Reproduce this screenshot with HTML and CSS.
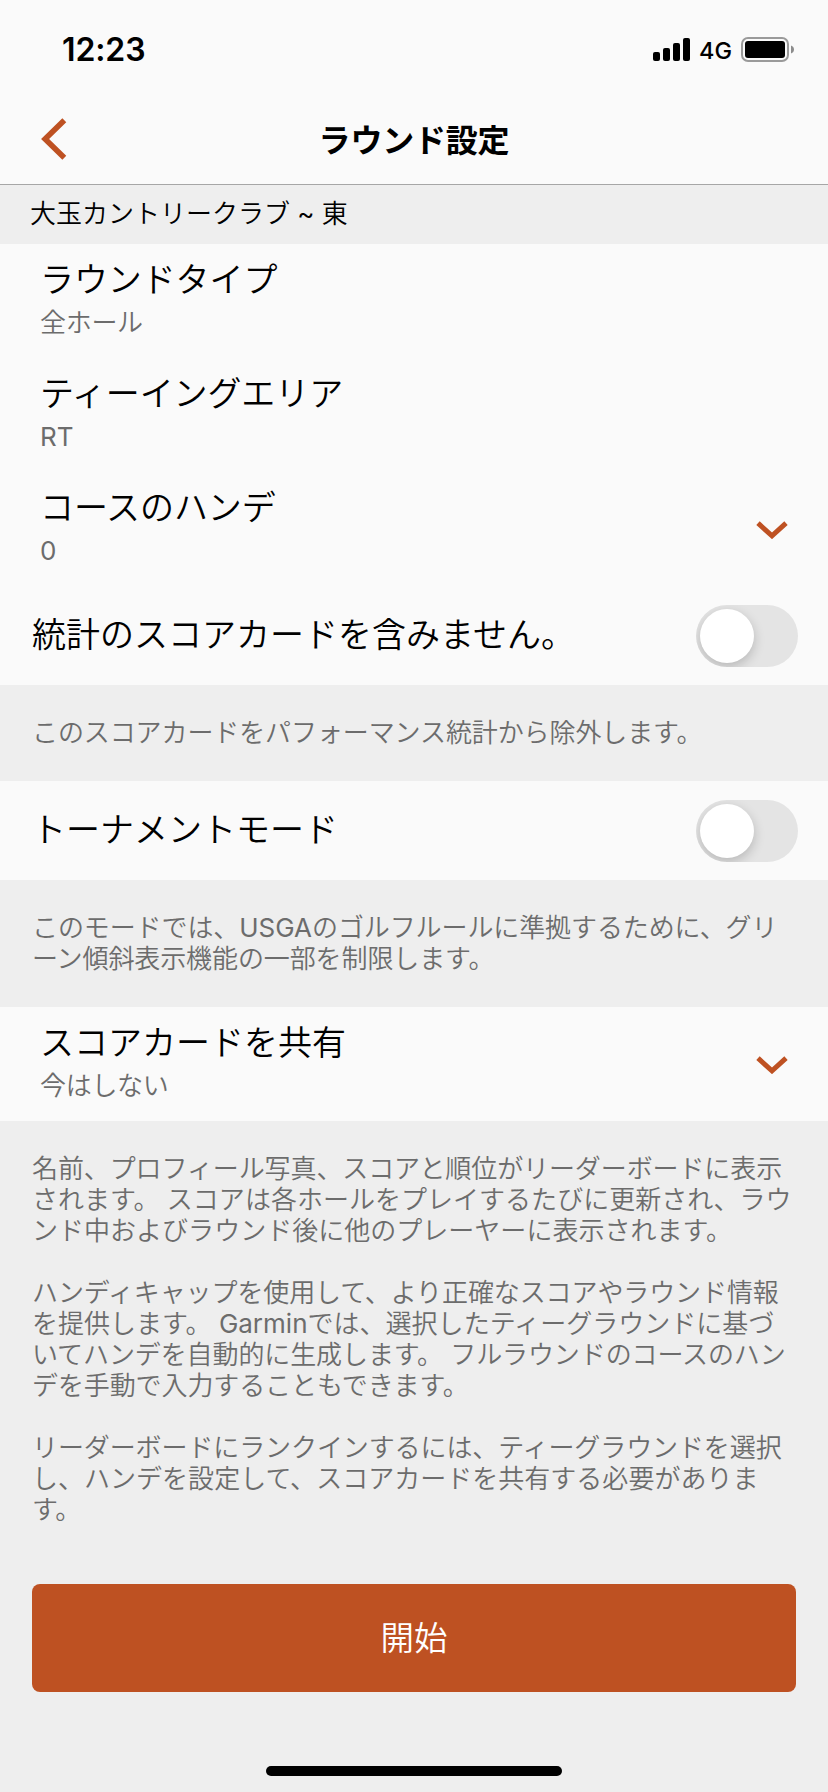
FILE: index.html
```html
<!DOCTYPE html>
<html lang="ja">
<head>
<meta charset="utf-8">
<title>ラウンド設定</title>
<link rel="stylesheet" href="styles.css">
</head>
<body>
<div class="screen">
  <div class="status">
    <span class="time">12:23</span>
    <div class="indicators">
      <svg class="signal" width="38" height="24" viewBox="0 0 38 24"><rect x="0" y="14" width="7" height="9" rx="2"/><rect x="10" y="10" width="7" height="13" rx="2"/><rect x="20" y="5" width="7" height="18" rx="2"/><rect x="30" y="0" width="7" height="23" rx="2"/></svg>
      <span class="network">4G</span>
      <svg class="battery" width="53" height="25" viewBox="0 0 53 25"><rect x="1" y="1" width="46" height="23" rx="6" fill="none" stroke="#9a9a9a" stroke-width="2"/><rect x="4" y="4" width="40" height="17" rx="3"/><path d="M50 8.500c4 1.200 4 6.800 0 8z" fill="#8c8c8c"/></svg>
    </div>
  </div>
  <header class="nav">
    <svg class="back" width="26" height="42" viewBox="0 0 26 42"><path d="M23.300 2.300 4.100 21l19.200 18.700" fill="none" stroke="#be5122" stroke-width="5.600"/></svg>
    <h1 class="title">ラウンド設定</h1>
  </header>
  <div class="course">大玉カントリークラブ <span class="latin">~</span> 東</div>

  <div class="row">
    <div class="text"><div class="label">ラウンドタイプ</div><div class="value">全ホール</div></div>
  </div>
  <div class="row">
    <div class="text"><div class="label">ティーイングエリア</div><div class="value latin">RT</div></div>
  </div>
  <div class="row">
    <div class="text"><div class="label">コースのハンデ</div><div class="value latin">0</div></div>
    <svg class="chevron" width="32" height="18" viewBox="0 0 32 18"><path d="M2 2.200 16 14.800 30 2.200" fill="none" stroke="#be5122" stroke-width="5"/></svg>
  </div>
  <div class="row toggle-row">
    <div class="label">統計のスコアカードを含みません。</div>
    <div class="toggle"><div class="thumb"></div></div>
  </div>
  <div class="note single">このスコアカードをパフォーマンス統計から除外します。</div>
  <div class="row toggle-row">
    <div class="label">トーナメントモード</div>
    <div class="toggle"><div class="thumb"></div></div>
  </div>
  <div class="note double">このモードでは、<span class="latin">USGA</span>のゴルフルールに準拠するために、グリ<br>ーン傾斜表示機能の一部を制限します。</div>
  <div class="row">
    <div class="text"><div class="label share">スコアカードを共有</div><div class="value">今はしない</div></div>
    <svg class="chevron" width="32" height="18" viewBox="0 0 32 18"><path d="M2 2.200 16 14.800 30 2.200" fill="none" stroke="#be5122" stroke-width="5"/></svg>
  </div>
  <div class="note info">
    <p>名前、プロフィール写真、スコアと順位がリーダーボードに表示<br><span class="loose">されます。 スコアは各ホールをプレイするたびに更新され、ラウ</span><br><span class="loose">ンド中およびラウンド後に他のプレーヤーに表示されます。</span></p>
    <p>ハンディキャップを使用して、より正確なスコアやラウンド情報<br><span class="loose">を提供します。 <span class="latin">Garmin</span>では、選択したティーグラウンドに基づ</span><br>いてハンデを自動的に生成します。 フルラウンドのコースのハン<br>デを手動で入力することもできます。</p>
    <p>リーダーボードにランクインするには、ティーグラウンドを選択<br><span class="loose">し、ハンデを設定して、スコアカードを共有する必要がありま</span><br>す。</p>
  </div>
  <button class="start">開始</button>
  <div class="home"></div>
</div>
</body>
</html>
```

FILE: styles.css
```css
* { box-sizing: border-box; }
body {
  margin: 0;
  background: #eee;
  color: #000;
  font-family: Inter, "Noto Sans CJK JP", sans-serif;
  font-weight: 350;
}
.screen {
  display: flex;
  flex-direction: column;
  width: 828px;
  height: 1792px;
  overflow: hidden;
}
.status {
  display: flex;
  justify-content: space-between;
  height: 96px;
  padding: 0 34px 0 62px;
  background: #fafafa;
}
.time {
  padding-top: 30px;
  font-size: 32px;
  line-height: 40px;
  font-weight: 600;
  letter-spacing: -0.1px;
}
.indicators { display: flex; align-items: flex-start; }
.signal { margin: 38px 8px 0 0; }
.network {
  width: 42px;
  padding-top: 36px;
  font-size: 23.5px;
  line-height: 30px;
  font-weight: 450;
}
.battery { margin-top: 37px; }
.nav {
  display: grid;
  grid-template-columns: 120px 1fr 120px;
  height: 89px;
  background: #fafafa;
  border-bottom: 1px solid #a6a6a6;
}
.back { margin: 22px 0 0 41px; }
.title {
  margin: 0;
  padding-top: 21px;
  text-align: center;
  font-size: 32px;
  line-height: 48px;
  font-weight: 700;
  letter-spacing: -0.2px;
}
.course {
  height: 59px;
  padding-left: 30px;
  font-size: 26px;
  line-height: 58px;
}
.row {
  display: flex;
  justify-content: space-between;
  height: 114px;
  padding: 0 40px;
  background: #fafafa;
}
.label {
  font-size: 34px;
  line-height: 50px;
  white-space: nowrap;
}
.text .label { margin-top: 11px; letter-spacing: -0.1px; }
.text .share { letter-spacing: 0; }
.value {
  margin-top: -1px;
  font-size: 26px;
  line-height: 38px;
  letter-spacing: -0.3px;
  color: #6c6c6c;
}
.latin { font-weight: 400; letter-spacing: 0; }
.chevron { margin-top: 49px; }
.toggle-row { height: 99px; padding: 19px 30px 0 32px; }
.toggle-row .label { line-height: 60px; }
.toggle {
  width: 102px;
  height: 62px;
  padding: 4px;
  border-radius: 31px;
  background: #e4e4e4;
  overflow: hidden;
}
.thumb {
  width: 54px;
  height: 54px;
  border-radius: 50%;
  background: #fff;
  box-shadow: 0 4px 12px rgba(0, 0, 0, 0.2);
}
.note {
  padding: 32px 0 0 32px;
  font-size: 26px;
  line-height: 31px;
  letter-spacing: -0.1px;
  color: #6c6c6c;
  white-space: nowrap;
}
.loose { letter-spacing: 0.02px; }
.single { height: 96px; }
.double { height: 127px; }
.info p { margin: 0 0 31px; }
.info p:last-child { margin: 0; }
.start {
  height: 108px;
  margin: 59px 32px 0;
  padding: 0 0 6px;
  border: 0;
  border-radius: 8px;
  background: #be5122;
  color: #fff;
  font: inherit;
  font-size: 33.5px;
}
.home {
  width: 296px;
  height: 10px;
  margin: 74px auto 0;
  border-radius: 5px;
  background: #000;
}
```
